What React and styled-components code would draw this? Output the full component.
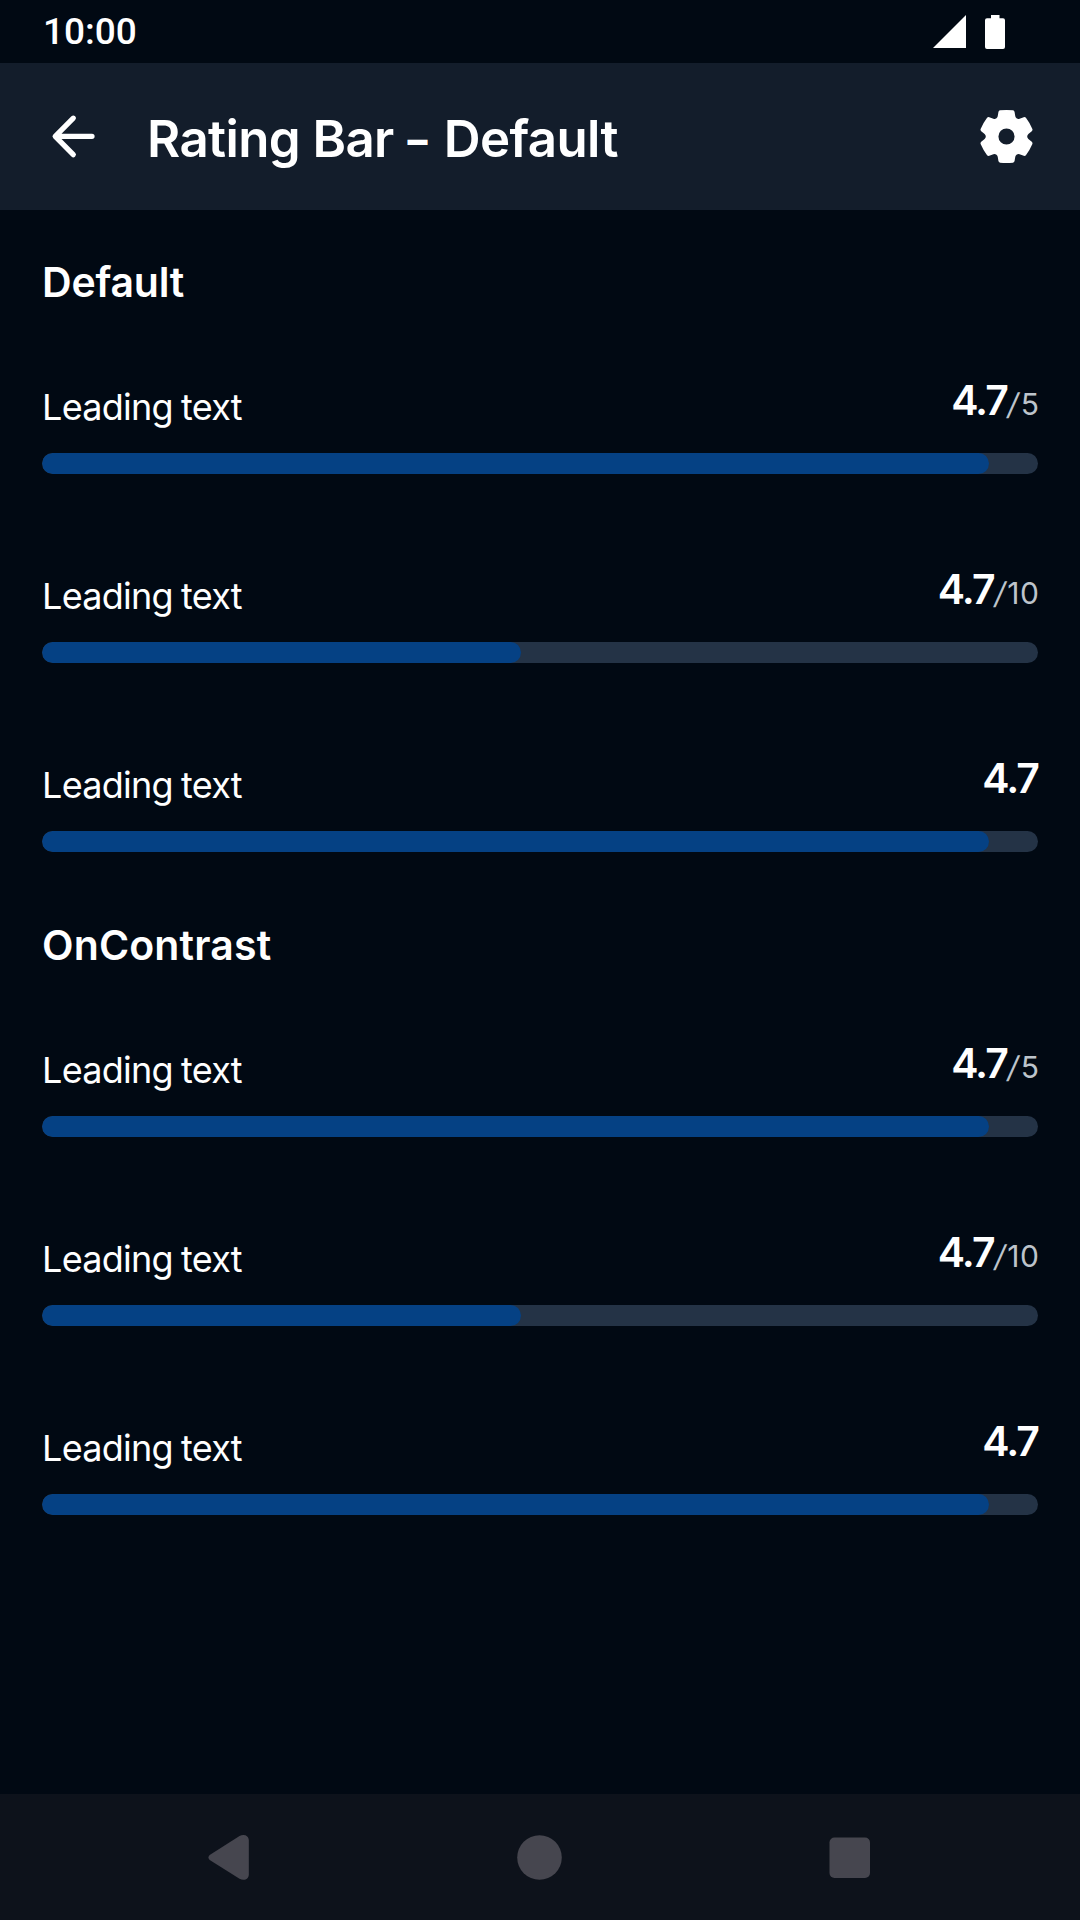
import React from "react";
import styled, { createGlobalStyle } from "styled-components";

const GlobalStyle = createGlobalStyle`
  * { box-sizing: border-box; }
  body { margin: 0; background: #010913; }
`;

const Screen = styled.div`
  display: flex;
  flex-direction: column;
  width: 1080px;
  height: 1920px;
  background: #010913;
  color: #fff;
  font-family: Inter, "Liberation Sans", sans-serif;
`;

const StatusBar = styled.header`
  display: flex;
  align-items: center;
  justify-content: space-between;
  height: 63px;
  padding: 0 75px 0 43px;
`;

const Clock = styled.span`
  font-family: Roboto, sans-serif;
  font-weight: 500;
  font-size: 37px;
  line-height: 63px;
`;

const StatusIcons = styled.div`
  display: flex;
  align-items: center;
  gap: 19px;
`;

const AppBar = styled.div`
  display: flex;
  align-items: center;
  height: 147px;
  padding: 0 42px;
  background: #131d2b;
`;

const Title = styled.h1`
  flex: 1;
  margin: 0;
  padding: 5px 0 0 42px;
  font-size: 51px;
  font-weight: 600;
  line-height: 60px;
  letter-spacing: -0.6px;
  white-space: nowrap;
`;

const Dash = styled.span`
  margin: 0 4.5px 0 1.5px;
  font-size: 40px;
  font-weight: 800;
  line-height: 1;
  vertical-align: 3px;
`;

const Content = styled.main`
  flex: 1;
  padding: 21px 42px 0;
`;

const SectionTitle = styled.h2`
  height: 96px;
  margin: 0;
  padding-top: 6px;
  font-size: 41px;
  font-weight: 600;
  line-height: 91px;
  letter-spacing: ${(p) => p.$spacing}px;
`;

const Rating = styled.div`
  height: 189px;
`;

const RatingHeader = styled.div`
  display: flex;
  justify-content: space-between;
  height: 126px;
`;

const Label = styled.span`
  padding-top: 34px;
  font-size: 36px;
  line-height: 92px;
  letter-spacing: -0.72px;
  word-spacing: -1.4px;
`;

const Score = styled.span`
  padding-top: 20px;
  font-size: 41px;
  font-weight: 600;
  line-height: 107px;
  letter-spacing: -2px;
  white-space: nowrap;
`;

const Scale = styled.span`
  margin-right: -1.5px;
  color: #bdc4cb;
  font-size: 30px;
  font-weight: 400;
  letter-spacing: 0.5px;
`;

const Slash = styled.span`
  display: inline-block;
  margin: 0 1.5px 0 1px;
  line-height: 1;
  transform: skewX(-10deg);
`;

const Track = styled.div`
  height: 21px;
  border-radius: 10.5px;
  background: #243346;
  overflow: hidden;
`;

const Fill = styled.div`
  width: calc(${(p) => p.$ratio * 100}% + 10.5px);
  height: 100%;
  border-radius: 10.5px;
  background: #054184;
`;

const NavBar = styled.nav`
  display: grid;
  grid-template-columns: repeat(3, 310px);
  justify-content: center;
  align-items: center;
  justify-items: center;
  height: 126px;
  background: #0d121b;
`;

function gearPath() {
  const points = [
    [-8.7, -20], [-8, -24.3], [-7.7, -25.6], [-6.4, -25.9], [0, -26.7],
    [6.4, -25.9], [7.7, -25.6], [8, -24.3], [8.7, -20], [9, -18.5], [10.25, -17.75],
    [11.5, -17.05],
  ];
  let d = "";
  for (let i = 0; i < 6; i++) {
    const a = (i * Math.PI) / 3;
    const p = points.map(([x, y]) =>
      `${(x * Math.cos(a) - y * Math.sin(a)).toFixed(2)} ${(x * Math.sin(a) + y * Math.cos(a)).toFixed(2)}`
    );
    const next = a + Math.PI / 3;
    const end = `${(-8.7 * Math.cos(next) + 20 * Math.sin(next)).toFixed(2)} ${(-8.7 * Math.sin(next) - 20 * Math.cos(next)).toFixed(2)}`;
    d += `${i ? "L" : "M"}${p[0]}L${p[1]}Q${p[2]} ${p[3]}Q${p[4]} ${p[5]}Q${p[6]} ${p[7]}L${p[8]}Q${p[9]} ${p[10]}Q${p[11]} ${end}`;
  }
  return `${d}ZM8 0A8 8 0 1 0-8 0A8 8 0 1 0 8 0Z`;
}

const BackIcon = () => (
  <svg width="63" height="63" viewBox="0 0 63 63" fill="none" stroke="#fff" strokeWidth="5.25" strokeLinecap="round" strokeLinejoin="round">
    <path d="M31.3 13.2L13.2 31.3L31.3 49.6M13.6 31.3H50" />
  </svg>
);

const SettingsIcon = () => (
  <svg width="63" height="63" viewBox="-31.2 -31.2 62.4 62.4" fill="#fff">
    <path fillRule="evenodd" d={gearPath()} />
  </svg>
);

function RatingBar({ max, showScale }) {
  return (
    <Rating>
      <RatingHeader>
        <Label>Leading text</Label>
        <Score>
          4.7
          {showScale && (
            <Scale>
              <Slash>/</Slash>
              {max}
            </Scale>
          )}
        </Score>
      </RatingHeader>
      <Track>
        <Fill $ratio={4.7 / max} />
      </Track>
    </Rating>
  );
}

function Section({ title, spacing }) {
  return (
    <section>
      <SectionTitle $spacing={spacing}>{title}</SectionTitle>
      <RatingBar max={5} showScale />
      <RatingBar max={10} showScale />
      <RatingBar max={5} />
    </section>
  );
}

export default function App() {
  return (
    <Screen>
      <GlobalStyle />
      <StatusBar>
        <Clock>10:00</Clock>
        <StatusIcons>
          <svg width="33" height="34" viewBox="0 0 33 34" fill="#fff">
            <path d="M33 0V33H0Z" />
          </svg>
          <svg width="20" height="34" viewBox="0 0 20 34" fill="#fff">
            <path d="M6 0H14.5V3.2H18Q20 3.2 20 5.2V32Q20 34 18 34H2Q0 34 0 32V5.2Q0 3.2 2 3.2H6Z" />
          </svg>
        </StatusIcons>
      </StatusBar>
      <AppBar>
        <BackIcon />
        <Title>
          Rating Bar <Dash>–</Dash> Default
        </Title>
        <SettingsIcon />
      </AppBar>
      <Content>
        <Section title="Default" spacing={-0.2} />
        <Section title="OnContrast" spacing={0.15} />
      </Content>
      <NavBar>
        <svg width="44" height="46" viewBox="0 0 44 46" fill="#46464f">
          <path d="M1.7 20.9L31.500 2.100Q34.500 .3 37.500 1.300Q40.800 2.800 40.800 6.500V40.500Q40.800 44.200 37.500 45.500Q34.500 46.300 31.500 44.700L1.700 26.100Q-.8 23.500 1.700 20.900Z" />
        </svg>
        <svg width="46" height="46" viewBox="0 0 46 46" fill="#46464f">
          <circle cx="22.500" cy="23.500" r="22.300" />
        </svg>
        <svg width="42" height="42" viewBox="0 0 42 42" fill="#46464f">
          <rect x="0.500" y="1.500" width="40.500" height="40.500" rx="5" />
        </svg>
      </NavBar>
    </Screen>
  );
}
